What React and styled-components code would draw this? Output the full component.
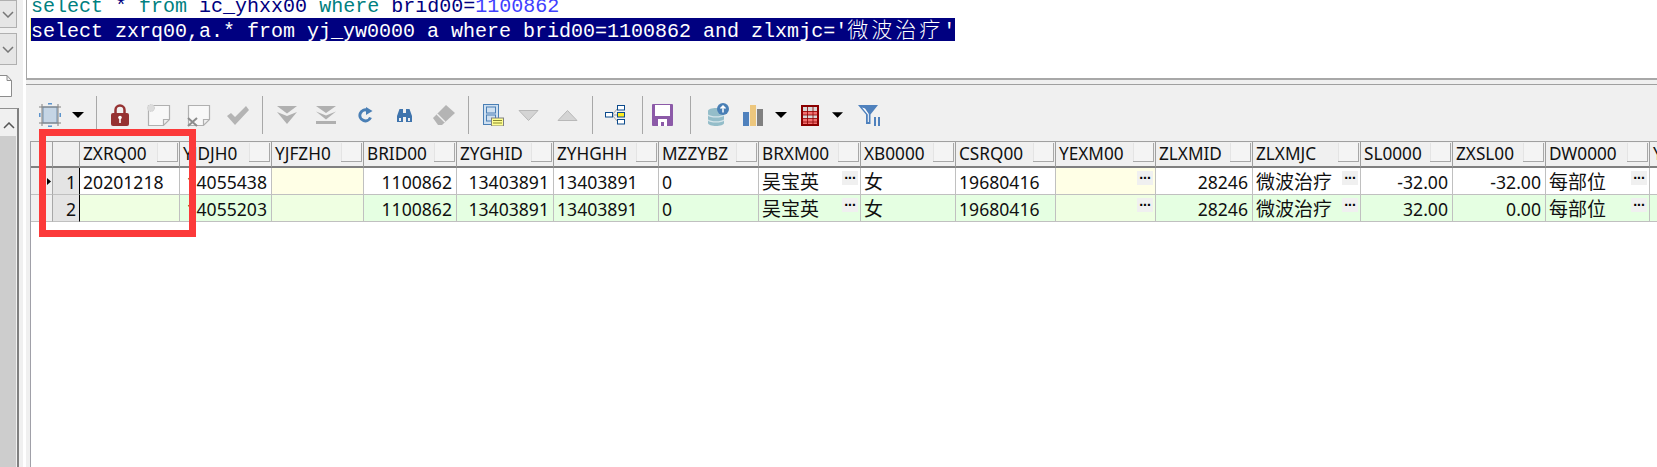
import React from 'react';
import styled, { createGlobalStyle } from 'styled-components';

const GlobalStyle = createGlobalStyle`
  html, body { margin: 0; padding: 0; background: #fff; overflow: hidden; }
  * { box-sizing: border-box; }
`;

const columns = [
  { name: 'ZXRQ00', w: 100, tint: 'soft' },
  { name: 'YJDJH0', w: 92, right: true },
  { name: 'YJFZH0', w: 92, tint: 'note' },
  { name: 'BRID00', w: 93, right: true },
  { name: 'ZYGHID', w: 97, right: true },
  { name: 'ZYHGHH', w: 105 },
  { name: 'MZZYBZ', w: 100 },
  { name: 'BRXM00', w: 102, more: true, cjk: true },
  { name: 'XB0000', w: 95, cjk: true },
  { name: 'CSRQ00', w: 100 },
  { name: 'YEXM00', w: 100, more: true, tint: 'note' },
  { name: 'ZLXMID', w: 97, right: true },
  { name: 'ZLXMJC', w: 108, more: true, cjk: true },
  { name: 'SL0000', w: 92, right: true },
  { name: 'ZXSL00', w: 93, right: true },
  { name: 'DW0000', w: 104, more: true, cjk: true },
  { name: 'Y', w: 60, noButton: true },
];

const rows = [
  ['20201218', '14055438', '', '1100862', '13403891', '13403891', '0', '吴宝英', '女', '19680416', '', '28246', '微波治疗', '-32.00', '-32.00', '每部位', ''],
  ['', '14055203', '', '1100862', '13403891', '13403891', '0', '吴宝英', '女', '19680416', '', '28246', '微波治疗', '32.00', '0.00', '每部位', ''],
];

const cellBackground = (rowIndex, tint) => {
  if (rowIndex === 0) return tint === 'note' ? '#ffffe6' : '#ffffff';
  return tint ? '#efffe2' : '#e5ffe2';
};

const Page = styled.div`
  display: flex;
  width: 1657px;
  height: 467px;
  overflow: hidden;
  background: #fff;
`;

const Sidebar = styled.aside`
  display: flex;
  width: 26px;
  flex: none;
  background: linear-gradient(to right, #f0f0f0 0 23px, #fff 23px);
`;

const Rail = styled.div`
  display: flex;
  flex-direction: column;
  width: 19px;
`;

const RailChip = styled.div`
  display: flex;
  align-items: center;
  justify-content: center;
  width: 17px;
  height: ${(p) => p.$h}px;
  margin-bottom: 5px;
  background: #e6e6e6;
  border: 1px solid #b0b0b0;
  border-left: none;
`;

const RailDoc = styled.div`
  height: 22px;
  margin-top: 5px;
`;

const RailPanel = styled.div`
  display: flex;
  flex-direction: column;
  flex: 1;
  margin-top: 11px;
  border-top: 1px solid #909090;
  border-right: 2px solid #808080;
`;

const RailArrow = styled.div`
  display: flex;
  align-items: center;
  justify-content: center;
  height: 27px;
  width: 17px;
  padding-top: 6px;
`;

const RailThumb = styled.div`
  flex: 1;
  width: 16px;
  background: #cdcdcd;
`;

const Main = styled.main`
  display: flex;
  flex-direction: column;
  flex: 1;
  min-width: 0;
`;

const Editor = styled.section`
  height: 80px;
  flex: none;
  padding-left: 4px;
  overflow: hidden;
  background: #fff;
  border-left: 1px solid #a8a8a8;
  border-bottom: 2px solid #a8a8a8;
  font-family: 'Liberation Mono', 'Noto Sans CJK SC', monospace;
  font-size: 20px;
`;

const SqlLine = styled.div`
  height: 23px;
  line-height: 23px;
  white-space: pre;
  margin-top: ${(p) => p.$top || 0}px;
`;

const Selected = styled.div`
  width: fit-content;
  height: 23px;
  line-height: 21px;
  color: #fff;
  background: #000080;
  box-shadow: -1px 0 0 #ffff80;
`;

const Sql = styled.span`
  color: ${(p) => p.$c};
`;

const SqlCjk = styled.span`
  font-family: 'Noto Sans CJK SC', sans-serif;
  font-size: 21px;
  font-weight: 300;
  line-height: 1;
  letter-spacing: 3px;
`;

const Splitter = styled.div`
  height: 5px;
  flex: none;
  background: #f0f0f0;
  border-bottom: 1px solid #a0a0a0;
`;

const Toolbar = styled.div`
  display: flex;
  align-items: center;
  height: 56px;
  flex: none;
  padding: 4px 0 0 13px;
  background: #f0f0f0;
`;

const Tool = styled.span`
  display: flex;
  flex: none;
  margin-left: ${(p) => p.$gap || 0}px;
`;

const Divider = styled.span`
  width: 1px;
  height: 38px;
  flex: none;
  margin-left: ${(p) => p.$gap}px;
  background: #a8a8a8;
`;

const GridWrap = styled.div`
  flex: 1;
  padding-left: 4px;
  background: #f0f0f0;
  min-height: 0;
`;

const Grid = styled.div`
  height: 100%;
  overflow: hidden;
  background: #fff;
  border-left: 1px solid #a0a0a8;
`;

const Row = styled.div`
  display: flex;
  height: 27px;
  width: max-content;
`;

const HeadCell = styled.div`
  display: flex;
  align-items: center;
  justify-content: space-between;
  flex: none;
  width: ${(p) => p.$w}px;
  padding: 0 1px 0 3px;
  overflow: hidden;
  background: #f0f0f0;
  border-top: 1px solid #a0a0a0;
  border-right: 1px solid #a0a0a0;
  border-bottom: 2px solid #808080;
  font-family: 'Noto Sans', sans-serif;
  font-size: 17.2px;
  line-height: 24px;
  color: #101010;
`;

const HeadButton = styled.span`
  width: 21px;
  height: 19px;
  flex: none;
  margin-top: -3px;
  background: #f4f4f4;
  border-right: 1px solid #a8a8a8;
  border-bottom: 1px solid #a8a8a8;
  box-shadow: inset 1px 0 0 #e4e4e4;
`;

const IndicatorCell = styled.div`
  display: flex;
  align-items: center;
  justify-content: flex-end;
  flex: none;
  width: 22px;
  padding-right: 1px;
  background: #f0f0f0;
  border-right: 1px solid #a8a8a8;
  border-bottom: 1px solid #c0c0c0;
`;

const NumberCell = styled.div`
  flex: none;
  width: 27px;
  padding: 2px 3px 0 0;
  text-align: right;
  background: #e4e4e4;
  border-right: 1px solid #000;
  border-bottom: 1px solid #c0c0c0;
  font-family: 'Noto Sans', sans-serif;
  font-size: 17.6px;
  line-height: 24px;
  color: #101010;
`;

const Cell = styled.div`
  display: flex;
  justify-content: ${(p) => (p.$right ? 'flex-end' : 'space-between')};
  flex: none;
  width: ${(p) => p.$w}px;
  padding: 1px ${(p) => (p.$more ? 2 : 4)}px 0 3px;
  overflow: hidden;
  background: ${(p) => p.$bg};
  border-right: 1px solid #c0c0c0;
  border-bottom: 1px solid #c0c0c0;
  font-family: 'Noto Sans', 'Noto Sans CJK SC', sans-serif;
  font-size: ${(p) => (p.$cjk ? 19 : 17.6)}px;
  line-height: 27px;
  color: #101010;
  white-space: nowrap;
`;

const MoreButton = styled.span`
  width: 16px;
  height: 14px;
  flex: none;
  margin-top: 2px;
  background: #f0f0f0;
  color: #000;
  font-family: 'Liberation Sans', sans-serif;
  font-size: 14px;
  font-weight: 700;
  line-height: 6px;
  letter-spacing: 0;
  text-align: center;
`;

const RedFrame = styled.div`
  position: absolute;
  left: 39px;
  top: 129px;
  width: 157px;
  height: 108px;
  border: 7px solid #fc3a3a;
  pointer-events: none;
`;

const Caret = ({ w = 12, gap }) => (
  <Tool $gap={gap}>
    <svg width={w} height="6" viewBox="0 0 12 6"><path d="M0 0h12L6 6z" fill="#000" /></svg>
  </Tool>
);

const Icon = ({ w, h, gap, children }) => (
  <Tool $gap={gap}>
    <svg width={w} height={h} viewBox={`0 0 ${w} ${h}`}>{children}</svg>
  </Tool>
);

const Note = () => (
  <path d="M1.5 1.5h21v14l-6 6h-15zM22.5 15.5h-6v6" fill="#f8f8f8" stroke="#b0b0b0" strokeWidth="1.2" />
);

const ToolbarIcons = () => (
  <Toolbar>
    <Icon w={22} h={24}>
      <rect x="4" y="4" width="14" height="16" fill="#c5d5e5" stroke="#6f8faf" />
      <path d="M3 1v22M19 1v22M0 4h22M0 20h22" stroke="#808080" strokeWidth="1" fill="none" />
      <path d="M9 1h4l-2-1.500zM9 23h4l-2 1.500zM1 10v4l-1.500-2zM21 10v4l1.500-2z" fill="#5b93cc" stroke="#5b93cc" />
    </Icon>
    <Caret gap={11} />
    <Divider $gap={12} />
    <Icon w={18} h={22} gap={14}>
      <path d="M4.500 9V6a4.500 4.500 0 0 1 9 0v3" fill="none" stroke="#963232" strokeWidth="2.500" />
      <rect x="0" y="9" width="18" height="13" rx="2" fill="#963232" />
      <circle cx="9" cy="13.500" r="1.800" fill="#fff" />
      <rect x="8.200" y="14" width="1.600" height="5" fill="#fff" />
    </Icon>
    <Icon w={24} h={23} gap={18}>
      <Note />
      <circle cx="4" cy="4" r="3.500" fill="#dcdcdc" stroke="#cfcfcf" strokeDasharray="1.500 1" />
    </Icon>
    <Icon w={24} h={23} gap={16}>
      <Note />
      <path d="M1 14l9 8M10 14l-9 8" stroke="#8c8c8c" strokeWidth="2" />
    </Icon>
    <Icon w={23} h={20} gap={15}>
      <path d="M1 11l4-3 4 4L20 1l3 4L9 20z" fill="#b4b4b4" />
    </Icon>
    <Divider $gap={13} />
    <Icon w={20} h={18} gap={14}>
      <path d="M0 0h20L10 7.500zM0 6l10 4 10-4-10 12z" fill="#b0b0b0" />
    </Icon>
    <Icon w={20} h={18} gap={19}>
      <path d="M0 0h20L10 7zM0 5.500l10 4 10-4-10 8z" fill="#b0b0b0" />
      <rect y="15" width="20" height="3" fill="#b0b0b0" />
    </Icon>
    <Icon w={15} h={16} gap={22}>
      <path d="M12.500 10.500A5.500 5.500 0 1 1 9.500 3.300" fill="none" stroke="#4a7fb5" strokeWidth="3" />
      <path d="M8 0l6.500 4-6.500 4z" fill="#4a7fb5" />
    </Icon>
    <Icon w={15} h={15} gap={24}>
      <path d="M2.500 1h3.500v13H0V8zM9 1h3.500L15 8v6H9zM6 5h3v4H6z" fill="#3f74ad" />
      <path d="M2 10h2v3H2zM11 10h2v3h-2z" fill="#e8eef4" />
    </Icon>
    <Icon w={22} h={20} gap={21}>
      <path d="M0 13L13 0l9 8-13 12H5z" fill="#b4b4b4" />
      <path d="M4 9l8 8" stroke="#f0f0f0" strokeWidth="1.500" />
    </Icon>
    <Divider $gap={13} />
    <Icon w={21} h={22} gap={14}>
      <rect x="0.500" y="0.500" width="15" height="20" fill="#cfe0f0" stroke="#4a7fb5" />
      <rect x="3.500" y="3" width="9" height="6" fill="none" stroke="#4a7fb5" />
      <rect x="3.500" y="11" width="9" height="6" fill="none" stroke="#4a7fb5" />
      <rect x="8.500" y="14" width="12" height="8" fill="#ffff90" stroke="#808080" />
      <path d="M10 16.500h9M10 19h9" stroke="#888830" />
    </Icon>
    <Icon w={21} h={11} gap={14}>
      <path d="M1 0.500h19l-9.500 10z" fill="#d4d4d4" stroke="#b8b8b8" />
    </Icon>
    <Icon w={21} h={11} gap={18}>
      <path d="M1 10.500h19l-9.500-10z" fill="#d4d4d4" stroke="#b8b8b8" />
    </Icon>
    <Divider $gap={14} />
    <Icon w={20} h={20} gap={12}>
      <path d="M7 10l6-7M7 10h6M7 10l6 7" stroke="#a0a0a0" fill="none" />
      <rect x="0.500" y="7.500" width="7" height="4.500" fill="#fff" stroke="#0b4a8c" />
      <rect x="12.500" y="0.500" width="7" height="4.500" fill="#fff" stroke="#0b4a8c" />
      <rect x="12.500" y="7.500" width="7" height="4.500" fill="#ffee20" stroke="#0b4a8c" />
      <rect x="12.500" y="14.500" width="7" height="4.500" fill="#fff" stroke="#0b4a8c" />
    </Icon>
    <Divider $gap={17} />
    <Icon w={21} h={22} gap={9}>
      <path d="M1 0h19a1 1 0 0 1 1 1v20a1 1 0 0 1-1 1H1a1 1 0 0 1-1-1V1a1 1 0 0 1 1-1z" fill="#8c5aa8" />
      <rect x="3" y="1" width="15" height="11" fill="#fff" />
      <path d="M6 22v-7h9v7h-3v-4H9v4z" fill="#fff" />
    </Icon>
    <Divider $gap={17} />
    <Icon w={22} h={24} gap={16}>
      <path d="M1 8c0-4 16-4 16 0v12c0 4-16 4-16 0z" fill="#94bdc9" />
      <path d="M1 12c3 2.500 13 2.500 16 0M1 17c3 2.500 13 2.500 16 0" stroke="#d5e5ea" fill="none" strokeWidth="1.200" />
      <circle cx="16" cy="6" r="6" fill="#4a7fb5" />
      <path d="M16 9.500V3M13.500 5.500L16 3l2.500 2.500" stroke="#fff" strokeWidth="1.500" fill="none" />
    </Icon>
    <Icon w={20} h={21} gap={14}>
      <rect y="7" width="6" height="14" fill="#4f81bd" />
      <rect x="7" width="6" height="21" fill="#edc77e" />
      <rect x="14" y="4" width="6" height="17" fill="#808080" />
    </Icon>
    <Caret gap={12} />
    <Icon w={18} h={21} gap={14}>
      <rect x="1" y="1" width="16" height="19" fill="#f47070" stroke="#8b0000" strokeWidth="2" />
      <path d="M2 2h14v4H2zM2 10h14v3.500H2z" fill="#d8d8d8" />
      <path d="M1 6.500h16M1 10h16M1 13.500h16M1 17h16M6.500 1v19M12 1v19" stroke="#8b0000" strokeWidth="0.800" />
    </Icon>
    <Caret w={11} gap={13} />
    <Icon w={22} h={21} gap={15}>
      <path d="M0 0h20l-7.500 9.500V19H8V9.500z" fill="#4f81bd" />
      <path d="M4 2.500L9.800 9.500V17h1V9L7 3.500z" fill="#fff" />
      <rect x="16" y="12" width="2" height="9" fill="#4f81bd" />
      <rect x="20" y="12" width="2" height="9" fill="#4f81bd" />
    </Icon>
  </Toolbar>
);

const RowMarker = () => (
  <svg width="4" height="7" viewBox="0 0 4 7"><path d="M0 0l4 3.500L0 7z" fill="#000" /></svg>
);

const Chevron = ({ up }) => (
  <svg width="12" height="7" viewBox="0 0 12 7">
    <path d={up ? 'M1 6l5-5 5 5' : 'M1 1l5 5 5-5'} fill="none" stroke={up ? '#555' : '#777'} strokeWidth="1.500" />
  </svg>
);

const App = () => (
  <Page>
    <GlobalStyle />
    <Sidebar>
      <Rail>
        <RailChip $h={28}><Chevron /></RailChip>
        <RailChip $h={32}><Chevron /></RailChip>
        <RailDoc>
          <svg width="12" height="22" viewBox="0 0 12 22">
            <path d="M-1 0.500h8l4.500 5v16H-1zM7 0.500v5h4.500" fill="#fff" stroke="#8c8c8c" />
          </svg>
        </RailDoc>
        <RailPanel>
          <RailArrow><Chevron up /></RailArrow>
          <RailThumb />
        </RailPanel>
      </Rail>
    </Sidebar>
    <Main>
      <Editor>
        <SqlLine $top={-5}>
          <Sql $c="#008080">select</Sql> <Sql $c="#000080">*</Sql> <Sql $c="#008080">from</Sql>{' '}
          <Sql $c="#000080">ic_yhxx00</Sql> <Sql $c="#008080">where</Sql> <Sql $c="#000080">brid00=</Sql>
          <Sql $c="#4040ff">1100862</Sql>
        </SqlLine>
        <SqlLine>
          <Selected>
            select zxrq00,a.* from yj_yw0000 a where brid00=1100862 and zlxmjc='<SqlCjk>微波治疗</SqlCjk>'
          </Selected>
        </SqlLine>
      </Editor>
      <Splitter />
      <ToolbarIcons />
      <GridWrap>
        <Grid>
          <Row>
            <HeadCell $w={22} />
            <HeadCell $w={27} />
            {columns.map((col) => (
              <HeadCell key={col.name} $w={col.w}>
                {col.name}
                {!col.noButton && <HeadButton />}
              </HeadCell>
            ))}
          </Row>
          {rows.map((row, rowIndex) => (
            <Row key={rowIndex}>
              <IndicatorCell>{rowIndex === 0 && <RowMarker />}</IndicatorCell>
              <NumberCell>{rowIndex + 1}</NumberCell>
              {columns.map((col, i) => (
                <Cell
                  key={col.name}
                  $w={col.w}
                  $right={col.right}
                  $more={col.more}
                  $bg={cellBackground(rowIndex, col.tint)}
                  $cjk={col.cjk}
                >
                  <span>{row[i]}</span>
                  {col.more && <MoreButton>...</MoreButton>}
                </Cell>
              ))}
            </Row>
          ))}
        </Grid>
      </GridWrap>
    </Main>
    <RedFrame />
  </Page>
);

export default App;
